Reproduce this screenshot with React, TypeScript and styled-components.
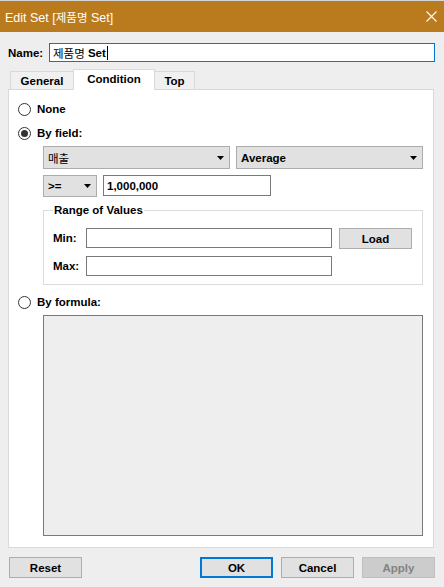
import React from "react";
import styled, { createGlobalStyle } from "styled-components";

const Global = createGlobalStyle`
  html, body { margin: 0; padding: 0; background: #eeeeee; }
  * { box-sizing: border-box; }
  body { font-family: "Liberation Sans", "Noto Sans CJK KR", sans-serif; font-size: 11.5px; color: #000; }
`;

const Window = styled.div`
  width: 444px;
  height: 587px;
  background: #eeeeee;
  display: flex;
  flex-direction: column;
  overflow: hidden;
  border-top: 1px solid #d6d6d6;
`;

const TitleBar = styled.div`
  height: 31px;
  background: #b97b1e;
  display: flex;
  align-items: center;
  justify-content: space-between;
  padding: 0 7px 0 5px;
  color: #fff;
  font-size: 12.5px;
  font-weight: normal;
`;

const Korean = styled.span`
  font-family: "Noto Sans CJK KR", sans-serif;
  font-weight: normal;
  font-size: 11.5px;
`;

const Body = styled.div`
  flex: 1;
  display: flex;
  flex-direction: column;
  padding: 0 10px 0 8px;
`;

const NameRow = styled.div`
  display: flex;
  align-items: center;
  margin-top: 11px;
  height: 19px;
`;

const Bold = styled.span`
  font-weight: bold;
`;

const NameLabel = styled.span`
  font-weight: bold;
  width: 41px;
`;

const NameInput = styled.div`
  flex: 1;
  height: 19px;
  border: 1px solid #0078d7;
  background: #fff;
  display: flex;
  align-items: center;
  padding-left: 3px;
  font-weight: bold;
  margin-right: -1px;
`;

const Caret = styled.span`
  display: inline-block;
  width: 1px;
  height: 14px;
  background: #000;
  margin-left: 1px;
`;

const TabBar = styled.div`
  display: flex;
  align-items: flex-end;
  margin-top: 7px;
  padding-left: 2px;
  height: 21px;
  position: relative;
  z-index: 1;
  margin-bottom: -1px;
`;

const Tab = styled.div<{ $active?: boolean; $w: number }>`
  width: ${(p) => p.$w}px;
  height: ${(p) => (p.$active ? 21 : 19)}px;
  background: ${(p) => (p.$active ? "#fff" : "#f0f0f0")};
  border: 1px solid #d9d9d9;
  border-bottom: ${(p) => (p.$active ? "none" : "1px solid #d9d9d9")};
  display: flex;
  align-items: center;
  justify-content: center;
  font-weight: bold;
  margin-left: ${(p) => (p.$active ? -1 : 0)}px;
  margin-right: ${(p) => (p.$active ? -1 : 0)}px;
  padding-bottom: ${(p) => (p.$active ? 2 : 0)}px;
  z-index: ${(p) => (p.$active ? 2 : 1)};
`;

const Panel = styled.div`
  height: 459px;
  background: #fff;
  border: 1px solid #d9d9d9;
  display: flex;
  flex-direction: column;
  padding: 0 10px 0 9px;
`;

const RadioRow = styled.div<{ $mt: number }>`
  display: flex;
  align-items: center;
  gap: 6px;
  height: 16px;
  margin-top: ${(p) => p.$mt}px;
  font-weight: bold;
`;

const RadioCircle = styled.span<{ $checked?: boolean }>`
  width: 13px;
  height: 13px;
  border-radius: 50%;
  border: 1px solid #333;
  background: #fff;
  display: flex;
  align-items: center;
  justify-content: center;
  &::after {
    content: "";
    display: ${(p) => (p.$checked ? "block" : "none")};
    width: 7px;
    height: 7px;
    border-radius: 50%;
    background: #333;
  }
`;

const Indented = styled.div<{ $mt: number }>`
  margin-left: 25px;
  margin-top: ${(p) => p.$mt}px;
  display: flex;
  flex-direction: column;
`;

const Row = styled.div<{ $mt?: number }>`
  display: flex;
  gap: 6px;
  margin-top: ${(p) => p.$mt ?? 0}px;
`;

const Select = styled.div<{ $w: number; $h: number }>`
  width: ${(p) => p.$w}px;
  height: ${(p) => p.$h}px;
  background: #e1e1e1;
  border: 1px solid #adadad;
  display: flex;
  align-items: center;
  justify-content: space-between;
  padding: 0 3px 0 4px;
  font-weight: bold;
`;

const Arrow = () => (
  <svg width="7" height="4" viewBox="0 0 7 4" style={{ marginRight: 2 }}>
    <polygon points="0,0 7,0 3.5,4" fill="#000" />
  </svg>
);

const TextBox = styled.div<{ $w: number; $h: number }>`
  width: ${(p) => p.$w}px;
  height: ${(p) => p.$h}px;
  background: #fff;
  border: 1px solid #7a7a7a;
  display: flex;
  align-items: center;
  padding-left: 3px;
  font-weight: bold;
`;

const GroupBox = styled.fieldset`
  margin: 7px 0 0 0;
  padding: 11px 10px 7px 9px;
  border: 1px solid #dcdcdc;
  width: 380px;
  height: 81px;
  display: flex;
  flex-direction: column;
  gap: 7px;
`;

const Legend = styled.legend`
  font-weight: bold;
  padding: 0 1px;
  margin-left: 0px;
  line-height: 12px;
`;

const FieldRow = styled.div`
  display: flex;
  align-items: center;
`;

const FieldLabel = styled.span`
  font-weight: bold;
  width: 33px;
`;

const Button = styled.div<{ $variant?: "default" | "primary" | "disabled" }>`
  width: 73px;
  height: 21px;
  display: flex;
  align-items: center;
  justify-content: center;
  font-weight: bold;
  background: ${(p) => (p.$variant === "disabled" ? "#cccccc" : "#e1e1e1")};
  color: ${(p) => (p.$variant === "disabled" ? "#838383" : "#000")};
  border: ${(p) =>
    p.$variant === "primary"
      ? "2px solid #0078d7"
      : p.$variant === "disabled"
      ? "1px solid #bfbfbf"
      : "1px solid #adadad"};
`;

const LoadButton = styled(Button)`
  margin-left: 7px;
  margin-top: 1px;
`;

const FormulaArea = styled.div`
  margin: 5px 0 0 25px;
  width: 380px;
  height: 221px;
  background: #eeeeee;
  border: 1px solid #7a7a7a;
`;

const Footer = styled.div`
  display: flex;
  align-items: center;
  margin: 9px -1px 0 1px;
  gap: 8px;
`;

const Spacer = styled.div`
  flex: 1;
`;

const CloseIcon = () => (
  <svg width="11" height="11" viewBox="0 0 11 11">
    <path d="M0.5 0.5 L10.5 10.5 M10.5 0.5 L0.5 10.5" stroke="#fff" strokeWidth="1.1" />
  </svg>
);

export default function App() {
  return (
    <>
      <Global />
      <Window>
        <TitleBar>
          <span>
            Edit Set [<Korean>제품명</Korean> Set]
          </span>
          <CloseIcon />
        </TitleBar>
        <Body>
          <NameRow>
            <NameLabel>Name:</NameLabel>
            <NameInput>
              <Korean>제품명</Korean>&nbsp;Set
              <Caret />
            </NameInput>
          </NameRow>
          <TabBar>
            <Tab $w={64}>General</Tab>
            <Tab $w={82} $active>
              Condition
            </Tab>
            <Tab $w={41}>Top</Tab>
          </TabBar>
          <Panel>
            <RadioRow $mt={11}>
              <RadioCircle />
              <Bold>None</Bold>
            </RadioRow>
            <RadioRow $mt={8}>
              <RadioCircle $checked />
              <Bold>By field:</Bold>
            </RadioRow>
            <Indented $mt={5}>
              <Row>
                <Select $w={187} $h={23}>
                  <Korean>매출</Korean>
                  <Arrow />
                </Select>
                <Select $w={187} $h={23}>
                  <span>Average</span>
                  <Arrow />
                </Select>
              </Row>
              <Row $mt={6}>
                <Select $w={54} $h={22}>
                  <span>&gt;=</span>
                  <Arrow />
                </Select>
                <TextBox $w={168} $h={21}>
                  1,000,000
                </TextBox>
              </Row>
              <GroupBox>
                <Legend>Range of Values</Legend>
                <FieldRow>
                  <FieldLabel>Min:</FieldLabel>
                  <TextBox $w={246} $h={20} />
                  <LoadButton>Load</LoadButton>
                </FieldRow>
                <FieldRow>
                  <FieldLabel>Max:</FieldLabel>
                  <TextBox $w={246} $h={20} />
                </FieldRow>
              </GroupBox>
            </Indented>
            <RadioRow $mt={9}>
              <RadioCircle />
              <Bold>By formula:</Bold>
            </RadioRow>
            <FormulaArea />
          </Panel>
          <Footer>
            <Button>Reset</Button>
            <Spacer />
            <Button $variant="primary">OK</Button>
            <Button>Cancel</Button>
            <Button $variant="disabled">Apply</Button>
          </Footer>
        </Body>
      </Window>
    </>
  );
}
